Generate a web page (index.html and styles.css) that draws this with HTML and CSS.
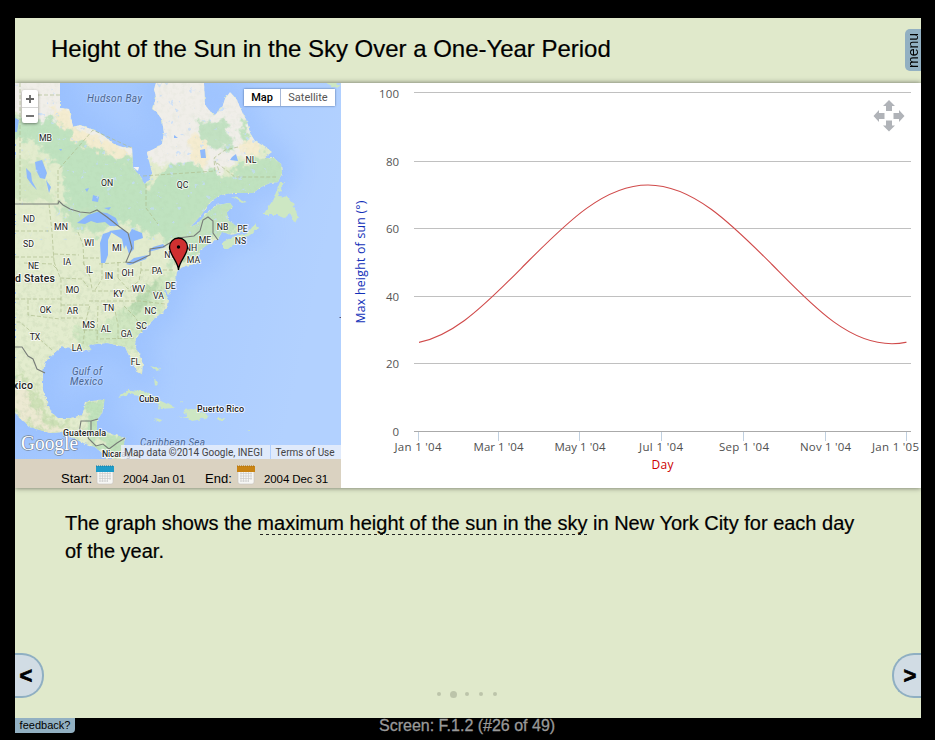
FILE: index.html
```html
<!DOCTYPE html>
<html lang="en">
<head>
<meta charset="utf-8">
<title>Height of the Sun in the Sky Over a One-Year Period</title>
<link rel="stylesheet" href="styles.css">
</head>
<body>
<main class="slide">
  <header class="slide-header">
    <h1 class="title">Height of the Sun in the Sky Over a One-Year Period</h1>
    <button class="menu-tab">menu</button>
  </header>

  <section class="activity">
    <div class="map-column">
      <div class="map">
        <svg class="map-art" viewBox="15 83 326 376" width="326" height="376">
          <defs>
            <linearGradient id="sea" x1="0" x2="1" y1="0" y2="0.25">
              <stop offset="0" stop-color="#9fc4ff"/><stop offset="0.55" stop-color="#a9cbff"/><stop offset="1" stop-color="#b2d1ff"/>
            </linearGradient>
            <filter id="soft" x="-20%" y="-20%" width="140%" height="140%"><feGaussianBlur stdDeviation="11"/></filter>
            <filter id="feather" x="-20%" y="-20%" width="140%" height="140%"><feGaussianBlur stdDeviation="1.8" result="b"/><feTurbulence type="fractalNoise" baseFrequency="0.11" numOctaves="3" seed="4"/><feDisplacementMap in="b" scale="22" xChannelSelector="R" yChannelSelector="G"/></filter>
            <filter id="rough"><feTurbulence type="fractalNoise" baseFrequency="0.25" numOctaves="2" seed="8"/><feDisplacementMap in="SourceGraphic" scale="4" xChannelSelector="R" yChannelSelector="G"/></filter>
            <filter id="specks" x="0" y="0" width="100%" height="100%">
              <feTurbulence type="fractalNoise" baseFrequency="0.16" numOctaves="3" seed="12"/>
              <feColorMatrix values="0 0 0 0 .55  0 0 0 0 .72  0 0 0 0 .98  13 0 0 0 -9.3"/>
            </filter>
            <filter id="relief" x="0" y="0" width="100%" height="100%">
              <feTurbulence type="fractalNoise" baseFrequency="0.22" numOctaves="3" seed="3"/>
              <feColorMatrix values="0 0 0 0 .35  0 0 0 0 .5  0 0 0 0 .3  2.4 0 0 0 -1.1"/>
            </filter>
            <path id="mainland" d="M15 83H60V108L69 109L73 127L80 125L93 130L104 136L115 145L126 148L132 147L133 168L141 177L144 184L148 182L152 173L148 157L147 152L156 148L162 144L164 133L162 120L157 112L153 109L156 97L154 89L156 83H204L205 105L214 116L222 108L225 99L230 92L237 100L242 112L247 122L250 133L255 141L267 148L272 152L264 158L274 158L281 164L282 173L278 182L270 183L261 187L253 193L233 193L220 195L210 202L204 211L198 219L190 227L197 224L206 214L217 205L230 203L233 207L227 212L228 220L235 225L244 231L232 235L222 232L218 239L210 243L200 250L198 257L202 260L197 263L180 268L177 272L175 283L168 295L165 287L164 292L168 298L167 307L163 312L155 318L148 325L140 333L136 337L135 345L143 363L142 375L137 372L130 358L125 347L117 345L107 343L97 344L88 345L92 350L80 351L72 348L63 347L55 353L45 362L43 373L43 390L48 405L52 413L58 418L70 418L82 415L86 402L105 399L102 413L97 420L97 430L110 433L125 438L123 450L123 459H107L102 453L95 447L80 442L63 432L50 433L30 427L15 413Z"/>
            <g id="islands">
              <path d="M280 182L284 182L278 196L288 197L293 203L298 217L295 223L290 213L285 218L277 215L263 215L273 200Z"/>
              <path d="M232 197L238 198L247 202L242 203Z"/>
              <path d="M223 249L223 242L232 237L248 233L255 223L258 228L250 235L240 240L228 249Z"/>
              <path d="M237 224L246 227L242 229Z"/>
              <path d="M118 397L128 390L143 391L157 398L167 403L175 408L160 409L157 403L143 397L130 394Z"/>
              <path d="M177 418L187 417L183 410L192 409L202 412L209 417L202 419L192 421L188 418Z"/>
              <path d="M217 418L225 418L224 421L217 420Z"/>
              <path d="M154 418L163 420L158 422Z"/>
              <path d="M154 376L157 384L155 386ZM150 366L160 368L158 371ZM180 402L183 401L182 403ZM248 430L250 430L249 432ZM326 83L337 83L341 86L334 87Z"/>
            </g>
            <clipPath id="land"><use href="#mainland"/></clipPath>
          </defs>
          <rect x="15" y="83" width="326" height="376" fill="url(#sea)"/>
          <use href="#mainland" fill="none" stroke="#8fb8fd" stroke-width="26" opacity=".4" filter="url(#soft)"/>
          <g filter="url(#rough)">
            <use href="#mainland" fill="#e3ecce"/>
            <use href="#islands" fill="#cde7c3"/>
          </g>
          <g clip-path="url(#land)">
            <g filter="url(#feather)">
              <path d="M0 65H290V130L255 150L210 180L160 163L120 160L70 130L0 110Z" fill="#f0eee9"/>
              <path d="M0 118L60 118L100 140L140 155L150 190L168 165L190 160L225 178L255 167L290 160V205L225 235L170 242L130 225L90 215L70 205L60 170L40 145L0 135Z" fill="#bfe2bf"/>
              <path d="M0 160H40L55 200H0Z" fill="#d3e6c2"/>
              <path d="M50 105L72 112L76 128L112 140L132 152L125 162L90 148L60 125Z" fill="#f4ecd0"/>
              <path d="M190 135L208 140L206 170L190 155ZM240 140L262 143L256 156L240 153Z" fill="#f5ecd0"/>
              <path d="M195 120L228 122L232 140L225 150L205 145Z" fill="#c2e1c2"/>
              <path d="M240 118L248 126L252 142L243 140ZM256 158L285 158V180L240 190L220 180Z" fill="#c0e2bf"/>
              <path d="M55 205L95 210L110 225L100 235L70 228ZM190 220L235 205L230 235L205 248L165 270L178 245Z" fill="#c3e2bf"/>
              <path d="M175 262L160 278L140 298L100 325L70 330L85 350L145 350L150 325L170 300Z" fill="#d1e7c2"/>
              <path d="M132 306L150 287L159 275L160 285L145 305L125 320Z" fill="#bad9b0"/>
              <path d="M15 375L30 380L42 410L65 425L78 440L40 436L15 416Z" fill="#cde0b6"/>
              <path d="M15 383L25 385L32 407L48 425L75 432L65 436L40 430L15 410Z" fill="#ece9d2"/>
              <path d="M85 400L108 398L98 430L127 438L118 460L105 450L87 435Z" fill="#c0e2bb"/>
            </g>
            <g fill="#8fbafd">
              <path d="M35 162L42 160L47 173L45 179L40 178L36 170ZM26 168L31 173L32 181L37 190L32 185L27 178ZM46 180L51 187L49 193Z"/>
              <path d="M93 195L99 197L98 202L92 201ZM85 189L89 188L87 192ZM104 208L111 207L109 210ZM232 157L236 154L238 161L230 160ZM200 150L205 149L206 158L201 158ZM15 118L19 120L17 132L15 132ZM59 149L62 149L61 151ZM174 135L178 138L174 138Z"/>
            </g>
            <path d="M15 83H320V240H15Z" filter="url(#specks)" opacity=".7"/>
            <path d="M15 83H320V459H15Z" filter="url(#relief)" opacity=".08"/>
            <path d="M15 380L28 383L34 405L50 421L75 427L100 430L123 438V459H15ZM133 305L160 270L165 280L145 309L120 320Z" filter="url(#relief)" opacity=".14"/>
          </g>
          <g fill="#8bb7fc">
            <path d="M77 223L88 215L97 212L107 213L116 218L119 226L110 226L105 222L97 223L91 221L85 224Z"/>
            <path d="M101 263L100 243L103 234L112 231L108 240L108 255L105 263Z"/>
            <path d="M109 231L123 229L129 234L132 229L142 233L143 238L134 241L134 249L129 254L126 245L124 249L122 239Z"/>
            <path d="M126 264L134 258L148 255L146 259L130 265ZM148 252L153 247L163 244L166 247L156 250Z"/>
            <path d="M133 167L139 167L138 171Z" fill="#f5f5f2"/>
          </g>
          <path class="state-lines" d="M20 83V204M60 95H25M58 204V170L93 130L132 148M146 184V208L158 224M49 204L52 232L54 262M15 231H50M15 257H54M54 254L79 255M54 262L58 272L61 280V312M15 299H61M24 263L52 264L58 270M28 300V315L60 319M78 232L83 245L84 265M84 258H99M60 278L82 279L88 287M83 262L90 277L92 289M102 264V279L95 290M118 262V279M99 264L128 262M141 262V270H175M141 270L139 281L128 289L118 278M92 291L130 291L163 291M89 301L140 301L165 304M61 305H90L86 320L83 344M98 306L97 343M114 306L118 325V339M100 339L135 338M124 306L136 318L142 332M61 318H83M143 176L215 171L214 159M217 163L235 177H276M238 147L225 150L214 158L220 173M175 265L174 247M184 262V240M185 259H198M52 350L20 322H15M83 330L97 330"/>
          <g class="borders">
            <path d="M15 204H58L59 201L63 205L70 209L80 212L90 213L97 210L107 217L117 225L128 233L132 248L126 262L133 263L150 255V249L163 247L178 238L194 236L200 231L203 220L208 217L213 221L213 233L218 240"/>
            <path d="M15 347L22 347L28 356L33 359L37 369L45 373M79 433L81 421H91V430L88 438M91 421L98 419M88 438L96 446L103 444L109 449L117 443L125 438"/>
          </g>
          <g class="sea-names">
            <text x="87" y="102" textLength="55">Hudson Bay</text>
            <text x="72" y="375" textLength="30">Gulf of</text>
            <text x="70" y="385" textLength="33">Mexico</text>
            <text x="140" y="446" textLength="65">Caribbean Sea</text>
          </g>
          <g class="states">
            <text x="45.500" y="140.500">MB</text><text x="107" y="185.500">ON</text><text x="182.500" y="187.500">QC</text><text x="251" y="162.500">NL</text>
            <text x="29" y="221.500">ND</text><text x="61" y="229.500">MN</text><text x="28.500" y="246.500">SD</text><text x="89" y="245.500">WI</text><text x="117" y="250.500">MI</text>
            <text x="33.500" y="268.500">NE</text><text x="67" y="264.500">IA</text><text x="89.500" y="272.500">IL</text><text x="109" y="278.500">IN</text><text x="127.500" y="275.500">OH</text><text x="157" y="273.500">PA</text>
            <text x="72.500" y="292.500">MO</text><text x="118.500" y="296.500">KY</text><text x="138.500" y="291.500">WV</text><text x="170.500" y="288.500">DE</text><text x="158.500" y="298.500">VA</text>
            <text x="45.500" y="312.500">OK</text><text x="72.500" y="313.500">AR</text><text x="108.500" y="310.500">TN</text><text x="150.500" y="313.500">NC</text><text x="88.500" y="327.500">MS</text><text x="106" y="331.500">AL</text><text x="141.500" y="328.500">SC</text><text x="126.500" y="336.500">GA</text>
            <text x="35" y="339.500">TX</text><text x="77" y="350.500">LA</text><text x="135.500" y="364.500">FL</text>
            <text x="222.500" y="229.500">NB</text><text x="242.500" y="231.500">PE</text><text x="205" y="242.500">ME</text><text x="240.500" y="243.500">NS</text><text x="191" y="250.500">NH</text><text x="193.500" y="262.500">MA</text><text x="170" y="257.500">NY</text>
          </g>
          <g class="countries">
            <text class="nation" x="15" y="282" textLength="40">d States</text>
            <text class="nation" x="13" y="389" textLength="20">xico</text>
            <text x="139" y="402" textLength="20">Cuba</text>
            <text x="197" y="412" textLength="47">Puerto Rico</text>
            <text x="63" y="436" textLength="43">Guatemala</text>
            <text x="102" y="457" textLength="38">Nicaragua</text>
          </g>
          <text class="google" x="21" y="450" textLength="57" lengthAdjust="spacingAndGlyphs">Google</text>
          <path d="M178.500 270C178 261 169.500 255 169.500 247A9 9 0 0 1 187.500 247C187.500 255 179 261 178.500 270Z" fill="#cf3030" stroke="#000" stroke-width="1.300"/>
          <circle cx="178.500" cy="247" r="1.700"/>
          <path d="M339.500 317.500H341" stroke="#557"/>
        </svg>
        <div class="zoom"><span><svg width="8" height="8" viewBox="0 0 8 8"><path d="M0 4H8M4 0V8"/></svg></span><span><svg width="8" height="8" viewBox="0 0 8 8"><path d="M0 4H8"/></svg></span></div>
        <div class="map-type"><b>Map</b><span>Satellite</span></div>
        <div class="legal"><span>Map data ©2014 Google, INEGI</span><span>Terms of Use</span></div>
      </div>
      <div class="dates">
        <label>Start:</label>
        <svg class="calendar" width="18" height="20" viewBox="0 0 18 20"><path d="M1 6H17V17Q17 19 15 19H3Q1 19 1 17Z" fill="#f7f7f5" stroke="#c7c5bf" stroke-width=".6"/><path d="M3 8.500H15M3 11H15M3 13.500H15M3 16H12M4 7V17M6.500 7V17M9 7V17M11.500 7V17M14 7V15" stroke="#cbcbcb" stroke-width=".7"/><path d="M0 1H18V7H0Z" fill="#1f9cc8"/><path d="M0 1H18" stroke="#147ba3" stroke-dasharray="1 1"/></svg>
        <span class="date">2004 Jan 01</span>
        <label class="end">End:</label>
        <svg class="calendar" width="18" height="20" viewBox="0 0 18 20"><path d="M1 6H17V17Q17 19 15 19H3Q1 19 1 17Z" fill="#f7f7f5" stroke="#c7c5bf" stroke-width=".6"/><path d="M3 8.500H15M3 11H15M3 13.500H15M3 16H12M4 7V17M6.500 7V17M9 7V17M11.500 7V17M14 7V15" stroke="#cbcbcb" stroke-width=".7"/><path d="M0 1H18V7H0Z" fill="#c98414"/><path d="M0 1H18" stroke="#a86c0d" stroke-dasharray="1 1"/></svg>
        <span class="date">2004 Dec 31</span>
      </div>
    </div>
    <div class="chart">
      <svg viewBox="341 83 580 405" width="580" height="405">
        <clipPath id="year"><rect x="419" y="90" width="487.500" height="345"/></clipPath>
        <path class="grid" d="M414 92.500H911M414 161.500H911M414 228.500H911M414 296.500H911M414 363.500H911"/>
        <path class="axis" d="M414 431.500H911"/>
        <path class="ticks" d="M418.500 432V441M498.500 432V441M579.500 432V441M661.500 432V441M743.500 432V441M825.500 432V441M906.500 432V441"/>
        <g class="y-labels">
          <text x="399" y="98" textLength="20">100</text><text x="399" y="166" textLength="13">80</text><text x="399" y="233" textLength="13">60</text><text x="399" y="301" textLength="13">40</text><text x="399" y="368" textLength="13">20</text><text x="399" y="436">0</text>
        </g>
        <g class="x-labels">
          <text x="418" y="451" textLength="47">Jan 1 '04</text><text x="498.500" y="451" textLength="50">Mar 1 '04</text><text x="580" y="451" textLength="51">May 1 '04</text><text x="661" y="451" textLength="44">Jul 1 '04</text><text x="744" y="451" textLength="50">Sep 1 '04</text><text x="825.500" y="451" textLength="51">Nov 1 '04</text><text x="895.500" y="451" textLength="47">Jan 1 '05</text>
        </g>
        <text class="x-title" x="662.500" y="469" textLength="22">Day</text>
        <text class="y-title" transform="translate(365 262) rotate(-90)" textLength="123">Max height of sun (°)</text>
        <path class="curve" clip-path="url(#year)" d="M404 344C448 344 486 304 525 264.500C565 224.500 603 185 648 185C693 185 732 224.500 772 264.500C811 304 847 343.700 892 343.700C937 343.700 970 304 1010 264.500"/>
        <path class="move" d="M889 100L895 106H892V111H886V106H883ZM889 131.500L895 125.500H892V120.500H886V125.500H883ZM873.500 116L879 110V113H884.500V119H879V122ZM904.500 116L899 110V113H893.500V119H899V122Z"/>
      </svg>
    </div>
  </section>

  <p class="caption">The graph shows the <span class="term">maximum height of the sun in the sky</span> in New York City for each day<br>of the year.</p>

  <nav class="pager">
    <button class="arrow prev">&lt;</button>
    <div class="dots"><i></i><i class="current"></i><i></i><i></i><i></i></div>
    <button class="arrow next">&gt;</button>
  </nav>
</main>
<footer class="status">
  <button class="feedback">feedback?</button>
  <span class="screen">Screen: F.1.2 (#26 of 49)</span>
</footer>
</body>
</html>
```
FILE: styles.css
```css
* { box-sizing: border-box; }
body {
  margin: 0;
  padding: 18px 14px 0 15px;
  height: 740px;
  overflow: hidden;
  background: #000;
  font-family: "Liberation Sans", Helvetica, Arial, sans-serif;
  color: #000;
}
button { border: 0; padding: 0; margin: 0; font-family: inherit; color: #000; }
.slide {
  height: 700px;
  background: #e0e9cb;
  display: flex;
  flex-direction: column;
  overflow: hidden;
}
.slide-header {
  height: 65px;
  flex: none;
  display: flex;
  justify-content: space-between;
  align-items: flex-start;
  padding-left: 36px;
}
.title { margin: 17px 0 0; font-size: 24px; line-height: 28px; font-weight: 400; white-space: nowrap; letter-spacing: -.02px; -webkit-text-stroke: .2px #000; }
.menu-tab {
  writing-mode: vertical-rl;
  transform: rotate(180deg);
  width: 16px;
  height: 42px;
  margin-top: 11px;
  background: #92b0c2;
  border-radius: 0 5px 5px 0;
  font-size: 14px;
  line-height: 17px;
  text-align: center;
}
.activity {
  height: 405px;
  flex: none;
  display: flex;
  background: #fff;
  box-shadow: 0 0 5px rgba(0, 0, 0, .55);
}
.map-column { width: 326px; }
.map { position: relative; height: 376px; font-family: Roboto, sans-serif; }
.map-art { display: block; }
.state-lines { fill: none; stroke: #aebd8c; stroke-width: .8; stroke-dasharray: 4 2; opacity: .85; }
.borders { fill: none; stroke: #777c78; stroke-width: 1.1; }
.map-art text { paint-order: stroke; stroke: #fff; stroke-opacity: .75; stroke-width: 2px; stroke-linejoin: round; }
.states { font-size: 8.7px; text-anchor: middle; fill: #222; }
.countries { font-size: 9px; font-weight: 500; fill: #222; }
.nation { font-size: 10.5px; }
.map-art .sea-names text { font-size: 10px; font-style: italic; fill: #4d6791; stroke: #bad5ff; }
.map-art .google { font-family: "Liberation Serif", serif; font-size: 22px; fill: #fff; stroke: #74859c; stroke-opacity: 1; stroke-width: 1.3px; }
.zoom {
  position: absolute;
  left: 7px;
  top: 7px;
  width: 16px;
  height: 33px;
  background: #fff;
  border-radius: 2px;
  box-shadow: 0 1px 3px rgba(0, 0, 0, .45);
}
.zoom span { display: flex; height: 17px; align-items: center; justify-content: center; }
.zoom span + span { height: 16px; border-top: 1px solid #d5d5d5; }
.zoom path { stroke: #666; stroke-width: 1.8; }
.map-type {
  position: absolute;
  top: 6px;
  right: 6px;
  display: flex;
  height: 17px;
  background: #fff;
  box-shadow: 0 0 2px rgba(30, 60, 110, .7);
  font-size: 11px;
  line-height: 18px;
  text-align: center;
  color: #555;
}
.map-type b { width: 36px; font-weight: 500; color: #000; }
.map-type span { width: 55px; border-left: 1px solid #a7b8d7; }
.legal {
  position: absolute;
  right: 0;
  bottom: 0;
  display: flex;
  height: 14px;
  font-size: 10px;
  line-height: 15px;
  color: #444;
  white-space: nowrap;
}
.legal span { background: rgba(235, 240, 250, .8); text-align: center; width: 70px; padding-right: 2px; }
.legal span:first-child { width: 149px; margin-right: 1px; padding-right: 4px; }
.dates {
  height: 29px;
  background: #dad2c1;
  display: flex;
  align-items: flex-start;
  padding: 6px 0 0 46px;
  font-size: 13px;
  line-height: 27px;
  white-space: nowrap;
}
.dates label { width: 35px; flex: none; }
.dates .end { width: 32px; }
.date { width: 91px; flex: none; padding-left: 9px; font-size: 11.5px; line-height: 28px; letter-spacing: -.1px; }
.date:last-child { width: 74px; }
.calendar { flex: none; }
.chart { width: 580px; font-family: "Open Sans", "Noto Sans", sans-serif; font-size: 11.5px; }
.chart svg { display: block; }
.grid { fill: none; stroke: #c0c0c0; }
.axis { stroke: #aaa; }
.ticks { stroke: #c0d0e0; }
.y-labels { text-anchor: end; fill: #555; }
.x-labels { text-anchor: middle; fill: #505050; }
.x-title { text-anchor: middle; fill: #c00; font-size: 12px; }
.y-title { text-anchor: middle; fill: #1230b8; font-size: 12.3px; }
.curve { fill: none; stroke: #d04a4a; stroke-width: 1.1; }
.move { fill: #b0b3b8; }
.caption {
  flex: 1;
  margin: 0;
  padding: 21px 0 0 50px;
  font-size: 20px;
  line-height: 28px;
  white-space: nowrap;
  -webkit-text-stroke: .2px #000;
}
.term {
  padding-bottom: 1px;
  background: repeating-linear-gradient(90deg, transparent 0 3px, #222 3px 6px) 0 100% / 100% 1px no-repeat;
}
.pager { height: 65px; flex: none; display: flex; justify-content: space-between; }
.arrow {
  width: 29px;
  height: 45px;
  background: #d1dce4;
  border: 2px solid #8fafc2;
  font-size: 22px;
  font-weight: 700;
  line-height: 40px;
  -webkit-text-stroke: .7px #000;
}
.prev { border-left: 0; border-radius: 0 22px 22px 0; padding-right: 5px; }
.next { border-right: 0; border-radius: 22px 0 0 22px; padding-left: 5px; }
.dots { display: flex; align-items: center; gap: 10px; height: 8px; margin: 37px 2px 0 0; }
.dots i { width: 4px; height: 4px; border-radius: 50%; background: #bcc4aa; }
.dots .current { width: 7px; height: 7px; margin: 0 -1.5px; }
.status { display: flex; height: 22px; align-items: flex-start; }
.feedback {
  width: 60px;
  height: 15px;
  background: #92b0c2;
  border-radius: 0 0 4px 0;
  font-size: 11px;
  line-height: 15px;
  text-align: center;
}
.screen { margin-left: 304px; color: #999; font-size: 16px; line-height: 16px; white-space: nowrap; -webkit-text-stroke: .3px #999; }
```
